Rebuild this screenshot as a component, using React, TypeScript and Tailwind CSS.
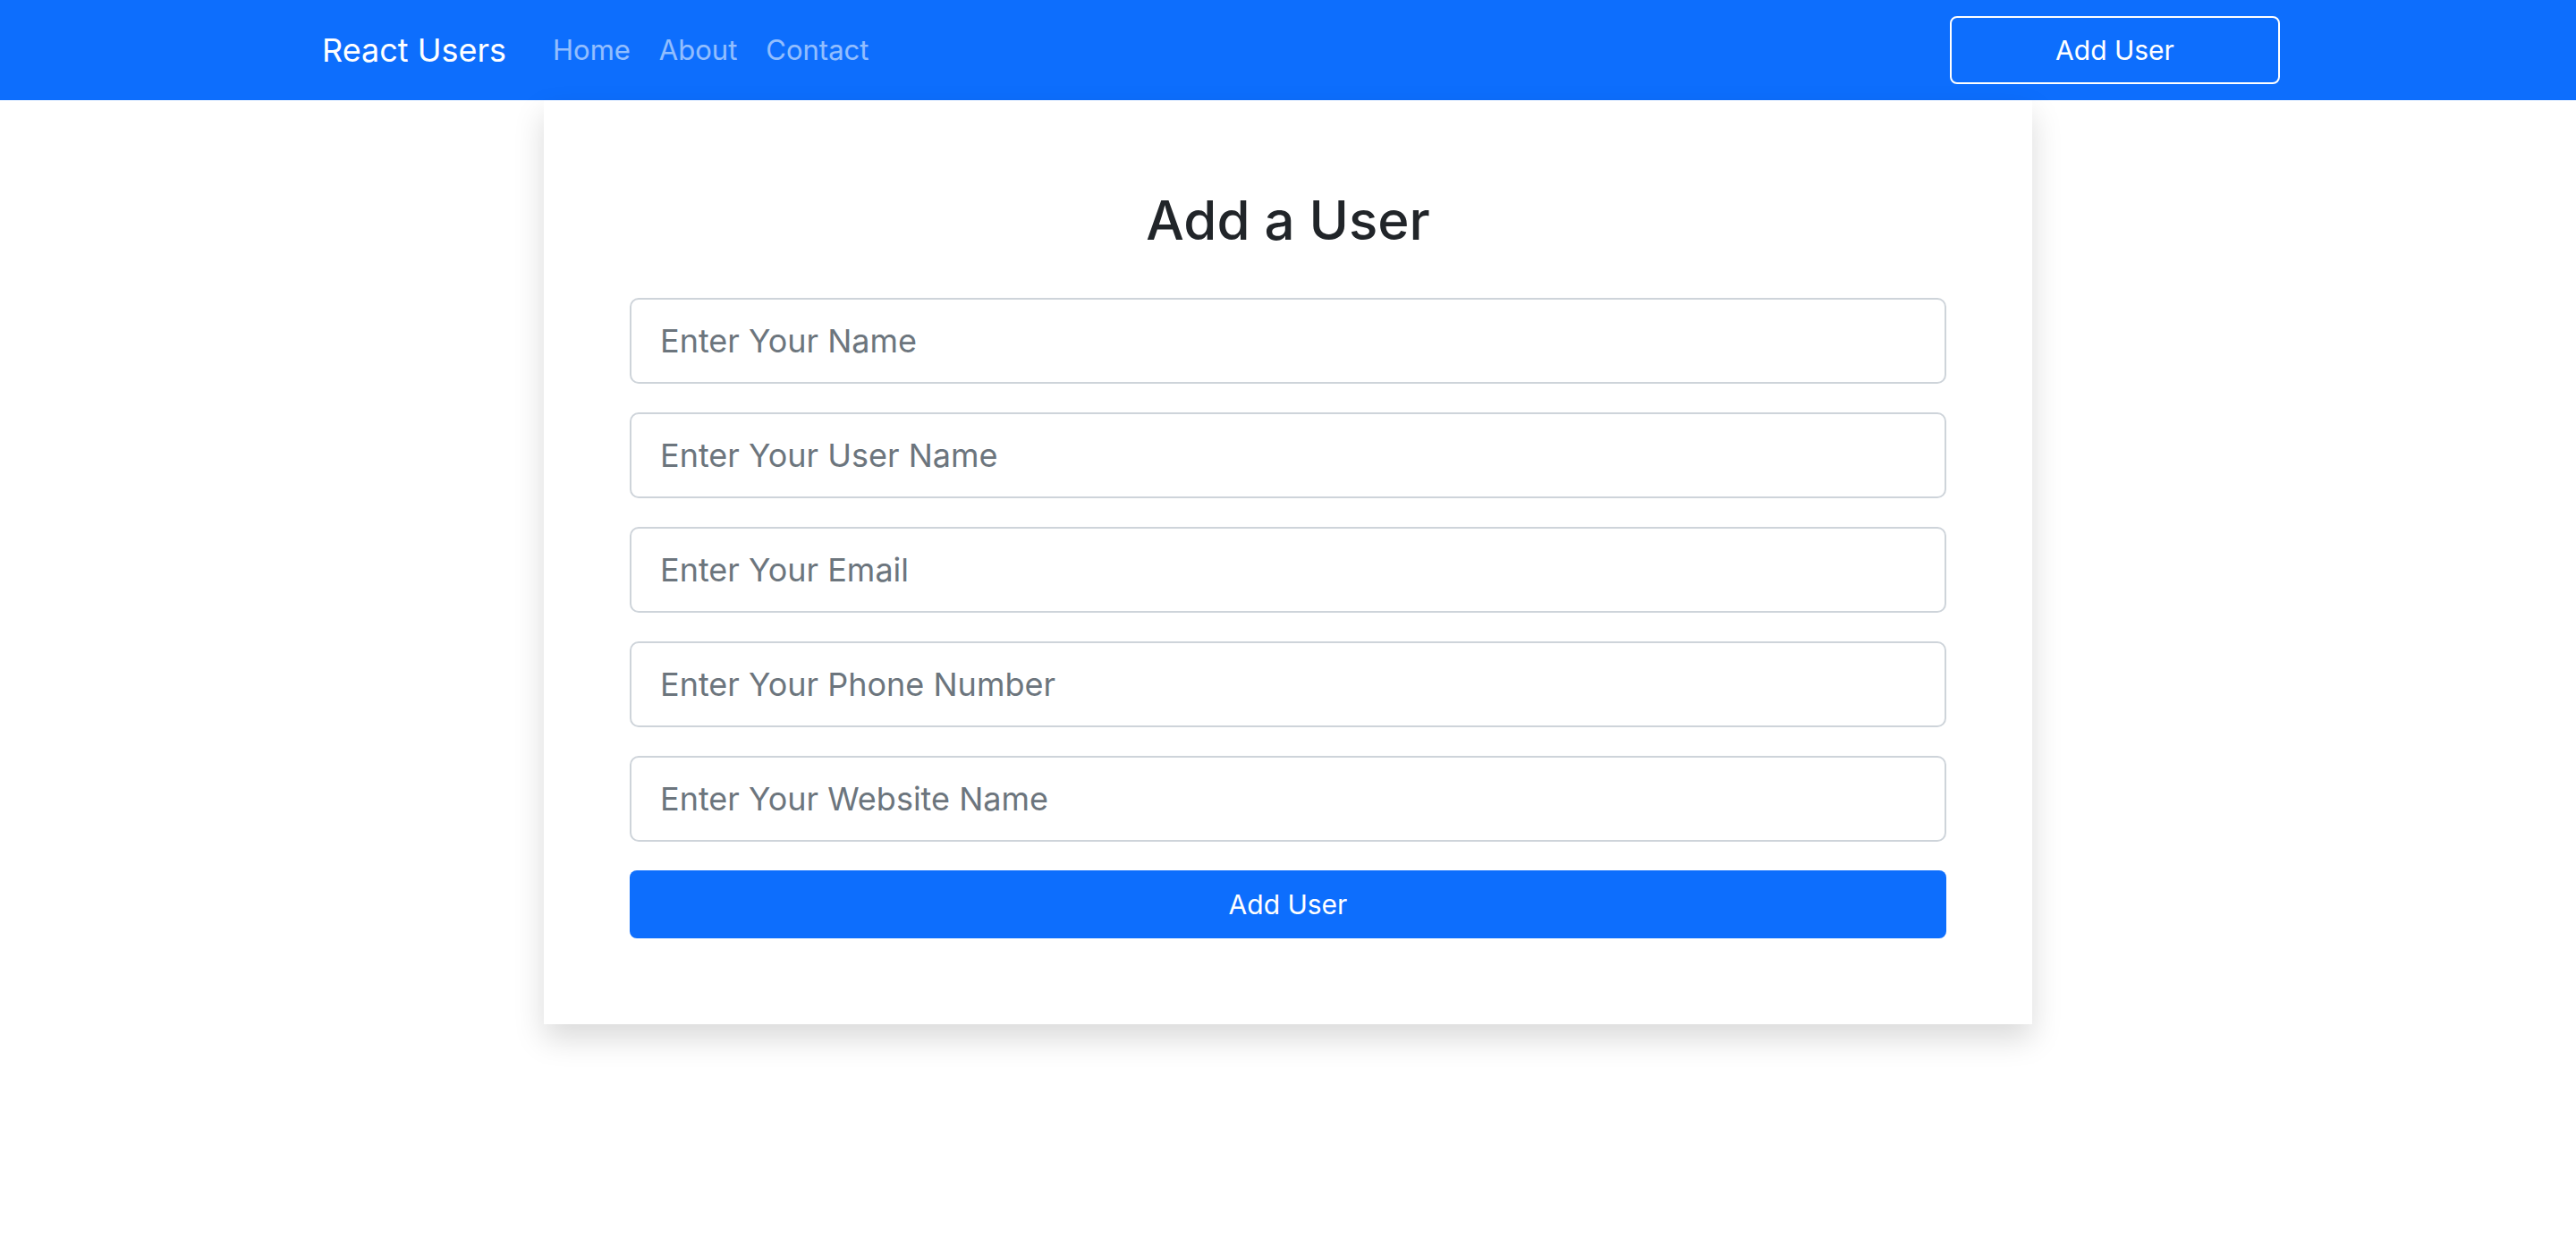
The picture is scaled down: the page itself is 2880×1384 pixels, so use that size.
import React from "react";

const fields = [
  "Enter Your Name",
  "Enter Your User Name",
  "Enter Your Email",
  "Enter Your Phone Number",
  "Enter Your Website Name",
];

const App: React.FC = () => {
  return (
    <div className="min-h-[1384px] bg-white font-['Inter','Liberation_Sans',sans-serif]">
      {/* Navbar */}
      <nav className="h-[112px] bg-[#0d6efd]">
        <div className="flex h-full items-center pl-[360px] pr-[331px]">
          <a className="mr-[36px] text-[36px] leading-none text-white" href="#">
            React Users
          </a>
          <ul className="flex items-center text-[31px] text-white/55">
            <li className="px-[16px]">Home</li>
            <li className="px-[16px]">About</li>
            <li className="px-[16px]">Contact</li>
          </ul>
          <button className="ml-auto h-[76px] w-[369px] rounded-[8px] border-2 border-white text-[30px] text-white">
            Add User
          </button>
        </div>
      </nav>

      {/* Card */}
      <div className="mx-auto w-[1664px] bg-white p-[96px] shadow-[0_16px_32px_rgba(0,0,0,0.15)]">
        <h2 className="mb-[48px] h-[77px] text-center text-[60px] leading-[77px] font-medium text-[#212529]">
          Add a User
        </h2>
        <form className="flex flex-col gap-[32px]">
          {fields.map((f) => (
            <input
              key={f}
              type="text"
              placeholder={f}
              className="h-[96px] w-full rounded-[10px] border-2 border-[#ced4da] px-[32px] text-[36px] text-[#212529] outline-none placeholder:text-[#6c757d]"
            />
          ))}
          <button
            type="button"
            className="h-[76px] w-full rounded-[8px] bg-[#0d6efd] text-[30px] text-white"
          >
            Add User
          </button>
        </form>
      </div>
    </div>
  );
};

export default App;
